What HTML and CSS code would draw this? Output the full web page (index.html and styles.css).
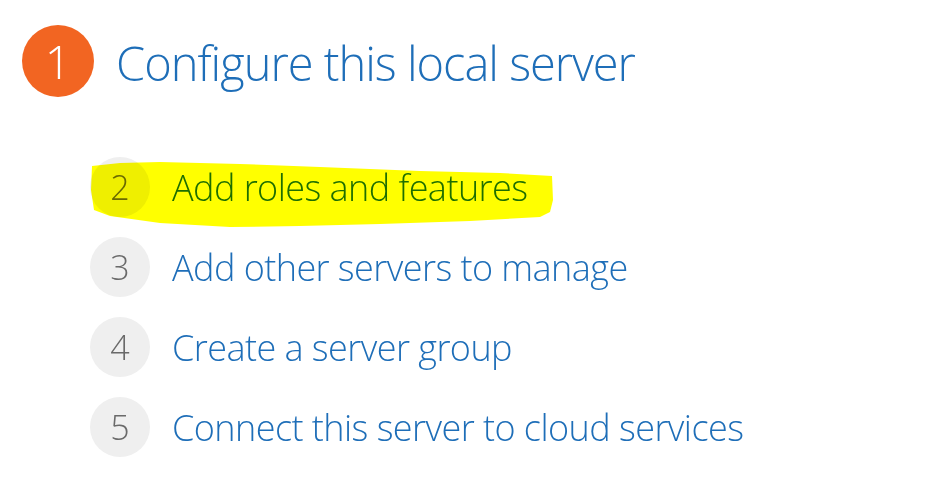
FILE: index.html
```html
<!DOCTYPE html>
<html>
<head>
<meta charset="utf-8">
<link rel="stylesheet" href="styles.css">
</head>
<body>
<div class="page">
  <div class="header">
    <div class="badge">1</div>
    <div class="title">Configure this local server</div>
  </div>
  <ul class="steps">
    <li class="step"><span class="num">2</span><span class="label">Add roles and features</span></li>
    <li class="step"><span class="num">3</span><span class="label">Add other servers to manage</span></li>
    <li class="step"><span class="num">4</span><span class="label">Create a server group</span></li>
    <li class="step"><span class="num">5</span><span class="label">Connect this server to cloud services</span></li>
  </ul>
  <svg class="marker" width="933" height="498" viewBox="0 0 933 498">
    <polygon fill="#ffff00" points="92,166 120,163 160,162 240,164 320,167 420,171 500,173 552,176 553,200 550,212 540,217 470,221 380,224 300,226 230,227 160,223 110,216 94,210 91,190"/>
  </svg>
</div>
</body>
</html>
```
FILE: styles.css
```css
html, body {
  margin: 0;
  padding: 0;
  background: #ffffff;
}
.page {
  position: relative;
  width: 933px;
  height: 498px;
  overflow: hidden;
  font-family: "Open Sans", "Liberation Sans", sans-serif;
  font-weight: 300;
}
.header {
  display: flex;
  align-items: flex-start;
  gap: 22px;
  padding: 25px 0 0 22px;
}
.badge {
  width: 72px;
  height: 72px;
  border-radius: 50%;
  background: #f26522;
  color: #ffffff;
  font-size: 46px;
  line-height: 72px;
  text-align: center;
}
.title {
  color: #1e6eb8;
  font-size: 47px;
  line-height: 76px;
  letter-spacing: -1px;
}
.steps {
  list-style: none;
  margin: 0;
  padding: 56px 0 0 90px;
  display: flex;
  flex-direction: column;
  gap: 20px;
}
.step {
  display: flex;
  align-items: center;
  gap: 22px;
  height: 60px;
}
.num {
  width: 60px;
  height: 60px;
  border-radius: 50%;
  background: #efefef;
  color: #6a6a6a;
  font-size: 34px;
  line-height: 60px;
  text-align: center;
}
.label {
  color: #1e6eb8;
  font-size: 36px;
  letter-spacing: -0.55px;
}
.marker {
  position: absolute;
  left: 0;
  top: 0;
  mix-blend-mode: multiply;
  pointer-events: none;
}
```
